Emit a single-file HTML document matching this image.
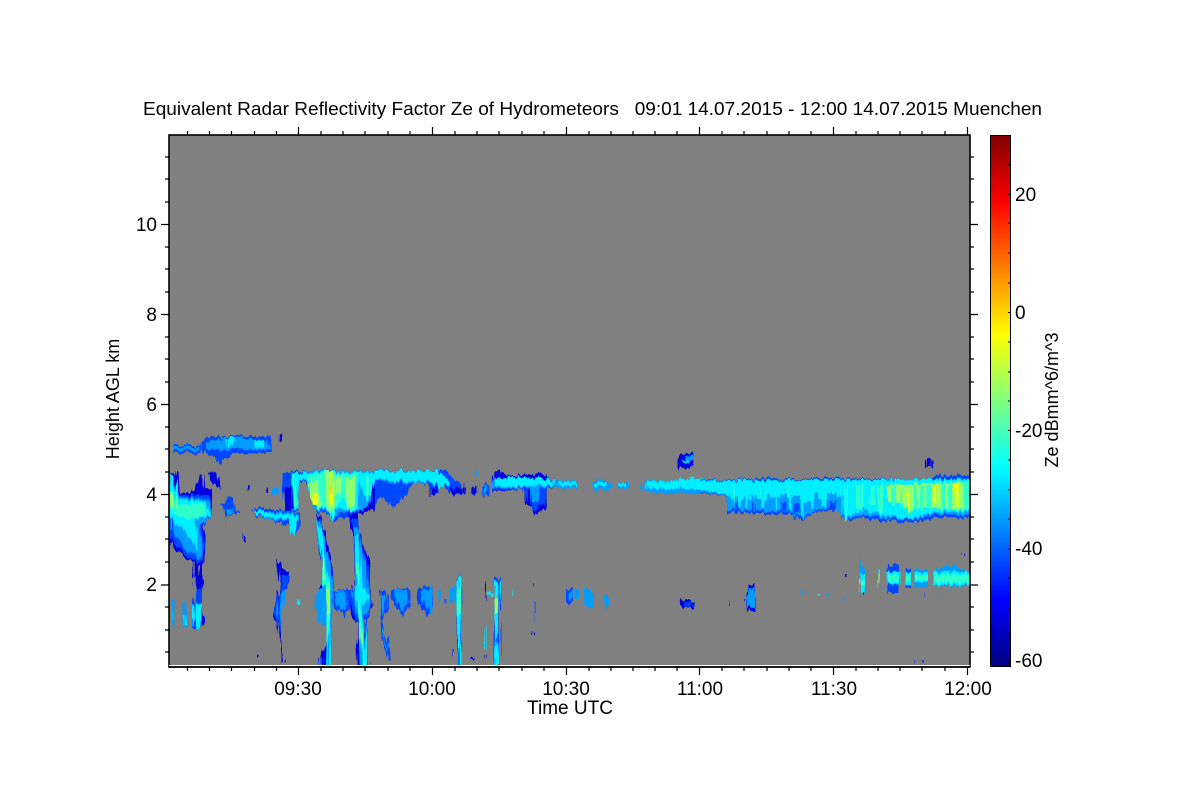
<!DOCTYPE html>
<html><head><meta charset="utf-8"><title>Radar Reflectivity</title>
<style>
html,body{margin:0;padding:0;background:#fff}
svg{display:block}
text{font-family:"Liberation Sans",Arial,sans-serif;fill:#000}
.a{fill:#0000e0}.b{fill:#0048ff}.c{fill:#009cff}.d{fill:#00eeff}.e{fill:#30ffcc}.f{fill:#90ff70}.g{fill:#f0ff10}.h{fill:#ffa000}
</style></head>
<body>
<svg width="1200" height="800" viewBox="0 0 1200 800" xmlns="http://www.w3.org/2000/svg">
<defs>
<linearGradient id="jet" x1="0" y1="1" x2="0" y2="0">
<stop offset="0" stop-color="#000080"/><stop offset=".125" stop-color="#0000ff"/><stop offset=".375" stop-color="#00ffff"/><stop offset=".5" stop-color="#80ff80"/><stop offset=".625" stop-color="#ffff00"/><stop offset=".875" stop-color="#ff0000"/><stop offset="1" stop-color="#800000"/>
</linearGradient>
<filter id="st" filterUnits="userSpaceOnUse" x="169" y="135" width="801" height="531" color-interpolation-filters="sRGB">
<feTurbulence type="fractalNoise" baseFrequency="0.34 0.012" numOctaves="2" seed="7"/>
<feDisplacementMap in="SourceGraphic" xChannelSelector="B" yChannelSelector="G" scale="9"/>
</filter>
<clipPath id="pc"><rect x="169" y="135" width="801" height="530"/></clipPath>
</defs>
<rect width="1200" height="800" fill="#fff"/>
<rect x="169" y="135" width="801" height="530" fill="#808080"/>
<g clip-path="url(#pc)"><g filter="url(#st)">
<g transform="translate(160 420) scale(.33333)">
<!-- top band left -->
<rect class="b" x="42" y="75" width="80" height="23"/>
<rect class="c" x="46" y="80" width="70" height="10"/>
<polygon class="b" points="125,70 140,52 205,48 330,48 338,97 275,99 220,105 190,118 180,135 165,110 125,95"/>
<polygon class="b" points="128,72 145,55 330,52 335,92 130,92"/>
<polygon class="c" points="140,68 205,50 320,60 330,88 140,88"/>
<polygon class="d" points="200,52 225,52 225,78 200,78"/><rect class="d" x="285" y="60" width="30" height="22"/>
<rect class="a" x="355" y="45" width="10" height="24"/>
<!-- left cloud -->
<polygon class="a" points="30,160 50,155 60,220 100,215 120,160 130,160 135,205 160,205 155,265 150,285 125,320 132,350 130,430 118,440 122,470 130,490 125,510 112,510 105,490 100,470 100,430 70,410 40,385 30,350"/>
<polygon class="a" points="145,155 170,155 182,210 165,190 148,175"/>
<polygon class="b" points="30,170 55,225 150,225 152,285 122,320 130,380 122,432 90,420 50,380 30,345"/>
<polygon class="c" points="30,190 60,230 150,240 150,285 118,320 125,425 105,410 80,395 60,370 35,325"/>
<polygon class="d" points="30,165 48,165 52,235 140,245 150,285 105,300 112,400 95,370 70,330 50,320 30,285"/>
<polygon class="e" points="30,215 45,215 50,255 130,250 138,282 95,300 60,295 35,275"/>
<polygon class="f" points="32,220 45,225 45,262 32,262"/>
<ellipse class="a" cx="117" cy="487" rx="15" ry="22"/>
<polygon class="b" points="108,505 124,505 125,622 100,622 100,560"/>
<polygon class="a" points="125,565 140,600 125,622"/>
<polygon class="d" points="103,550 124,550 126,590 118,622 108,622 102,590"/>
<rect class="c" x="36" y="540" width="7" height="82"/><rect class="d" x="38" y="560" width="3" height="40"/>
<polygon class="c" points="72,545 82,545 85,622 70,622"/><rect class="d" x="74" y="585" width="7" height="30"/>
<!-- small blobs -->
<polygon class="b" points="195,245 205,228 220,232 225,268 238,275 215,285 195,285 192,318 190,265 183,255"/>
<polygon class="c" points="198,262 222,270 212,283 198,283"/>
<rect class="a" x="245" y="345" width="14" height="18"/>
<rect class="c" x="338" y="205" width="18" height="18"/>
<rect class="a" x="266" y="198" width="3" height="14"/><rect class="a" x="321" y="205" width="3" height="14"/>
<!-- stripe -->
<polygon class="b" points="275,268 295,262 420,278 423,320 400,335 390,320 350,305 330,295 285,288"/>
<polygon class="c" points="278,270 410,280 415,300 350,300 300,288"/>
<polygon class="d" points="280,272 300,270 345,282 410,285 398,340 390,322 385,298 340,292 285,282"/>
<!-- main top band -->
<polygon class="b" points="370,155 840,150 840,215 820,228 800,190 760,185 730,235 700,260 660,230 640,270 590,280 580,290 520,300 510,280 470,275 440,185 415,185 412,270 380,275 368,205"/>
<polygon class="a" points="372,200 392,200 395,270 380,275"/><polygon class="a" points="590,190 640,190 640,270 600,280"/>
<polygon class="c" points="430,155 650,152 840,155 840,188 690,188 640,180 630,255 595,275 555,275 520,290 510,275 460,265 445,185 430,180"/>
<polygon class="d" points="392,160 840,150 840,183 720,183 640,178 625,250 610,225 600,180 590,275 560,270 530,265 518,305 508,265 470,265 450,225 445,180 415,178 412,265 403,265 392,190"/>
<polygon class="e" points="450,165 590,160 585,270 560,270 550,230 530,260 520,285 500,262 475,262 455,235"/>
<polygon class="f" points="450,190 475,185 482,255 462,255 450,235"/>
<polygon class="f" points="495,155 520,155 525,255 510,275 498,235"/>
<polygon class="f" points="555,175 578,170 585,255 565,265 558,230"/>
<polygon class="f" points="528,170 545,170 540,220 530,220"/>
<polygon class="g" points="458,220 472,225 475,255 462,255"/>
<polygon class="g" points="504,160 518,160 520,250 510,258 504,220"/>
<polygon class="f" points="560,185 575,185 572,230 562,225"/>
<rect class="h" x="507" y="165" width="6" height="60"/>
<polygon class="e" points="396,165 408,165 410,255 402,255"/>
<polygon class="e" points="615,170 628,170 630,240 620,230"/>
<!-- streak 1 -->
<polygon class="a" points="465,280 480,285 483,320 500,335 520,430 522,500 510,610 512,738 485,738 482,715 500,650 495,600 475,520 483,490 482,420 470,330"/>
<polygon class="c" points="465,285 480,300 482,325 495,345 515,435 520,500 510,610 512,738 498,738 500,640 490,570 482,490 483,420 470,330"/>
<polygon class="d" points="468,295 480,325 490,350 500,440 512,495 505,600 508,738 501,738 500,640 492,570 484,480 484,420"/>
<polygon class="e" points="484,400 494,400 498,470 512,500 505,600 503,680 500,680 492,570 486,480"/>
<polygon class="f" points="484,415 492,415 494,478 486,478"/><polygon class="f" points="500,505 510,510 503,585 498,585"/>
<!-- streak 2 -->
<polygon class="a" points="568,280 590,280 600,320 605,360 627,420 630,490 640,560 615,600 628,738 590,738 588,690 598,620 575,590 570,540 582,480 578,345"/>
<polygon class="b" points="575,295 595,300 603,365 622,420 625,495 640,550 615,600 626,738 600,738 598,620 580,585 572,530 584,490 580,345"/>
<polygon class="c" points="578,320 598,325 605,380 618,430 622,500 635,545 612,590 625,738 603,738 598,610 585,570 575,520 584,490 582,350"/>
<polygon class="d" points="582,345 594,345 604,440 610,500 625,525 608,570 620,738 607,738 598,600 592,570 582,515 592,490 588,370"/>
<polygon class="e" points="590,430 600,435 603,495 595,495"/>
<polygon class="e" points="594,535 600,545 615,738 610,738"/>
<polygon class="f" points="602,635 607,635 609,675 605,675"/>
<!-- left column streak -->
<polygon class="a" points="345,408 355,430 385,455 390,475 372,520 362,590 360,640 368,700 375,728 363,728 360,680 350,605 342,585 350,540 360,500 355,460"/>
<polygon class="b" points="362,465 385,462 388,478 370,520 368,600 358,640 350,600 345,570 352,535 365,500"/>
<polygon class="c" points="360,525 378,505 372,560 368,600 358,615 352,580"/>
<!-- low-level band -->
<polygon class="b" points="520,515 560,505 575,515 572,560 555,590 540,570 525,565"/>
<polygon class="c" points="528,515 560,510 565,555 545,570 530,550"/>
<polygon class="c" points="470,520 495,490 500,560 495,620 480,610 468,560"/>
<polygon class="b" points="655,515 680,510 685,570 668,600 690,695 692,728 685,728 680,695 665,640 660,590 658,550"/>
<polygon class="c" points="660,525 680,525 680,565 668,585"/>
<polygon class="c" points="670,620 680,670 690,695 683,690 668,640"/>
<polygon class="b" points="695,510 745,505 752,560 730,585 712,570 695,530"/>
<polygon class="c" points="705,510 740,510 745,550 725,570 708,540"/>
<polygon class="b" points="775,505 820,495 822,560 800,590 780,550 768,530"/>
<polygon class="c" points="785,510 815,510 815,550 800,570 788,540"/>
<rect class="c" x="835" y="515" width="5" height="40"/>
<rect class="d" x="412" y="540" width="10" height="14"/>
<rect class="a" x="290" y="705" width="4" height="8"/>
<rect class="b" x="482" y="715" width="6" height="22"/>
</g>
<g transform="translate(430 440) scale(.33333)">
<polygon class="b" points="0,90 50,90 75,125 100,130 102,162 60,162 30,125 20,165 0,165"/>
<polygon class="d" points="0,92 25,92 65,130 30,142 0,125"/>
<rect class="a" x="0" y="145" width="18" height="20"/><rect class="a" x="65" y="145" width="38" height="18"/>
<rect class="c" x="132" y="96" width="10" height="18"/>
<rect class="a" x="124" y="140" width="16" height="22"/>
<rect class="b" x="155" y="132" width="22" height="35"/><rect class="c" x="160" y="140" width="12" height="22"/>
<polygon class="a" points="190,105 210,92 228,105 250,105 350,105 352,145 350,200 315,225 305,200 285,190 280,145 190,155"/>
<polygon class="b" points="190,115 370,118 372,142 350,148 340,195 325,195 320,215 305,205 302,145 290,145 290,190 280,145 190,152"/>
<polygon class="c" points="188,122 372,122 372,140 325,145 325,185 305,185 305,142 188,145"/>
<polygon class="d" points="196,120 240,108 300,115 372,122 370,138 196,140"/>
<polygon class="c" points="375,122 445,122 445,144 405,144 405,160 398,144 375,144"/>
<rect class="d" x="385" y="125" width="55" height="12"/>
<polygon class="c" points="485,130 495,120 530,120 548,140 540,152 500,145 498,160 490,145"/>
<rect class="d" x="495" y="128" width="40" height="10"/>
<rect class="c" x="560" y="128" width="40" height="17"/><rect class="d" x="568" y="130" width="24" height="9"/>
<rect class="c" x="628" y="130" width="10" height="20"/>
<polygon class="c" points="645,122 840,118 840,160 680,160 645,152"/>
<polygon class="d" points="648,125 760,120 790,112 840,122 840,148 648,145"/>
<polygon class="a" points="745,56 768,40 792,40 792,80 752,88 744,78"/>
<rect class="c" x="768" y="48" width="24" height="16"/><rect class="d" x="760" y="62" width="14" height="6"/>
<!-- low -->
<polygon class="c" points="0,436 10,436 10,520 0,510"/>
<rect class="c" x="25" y="450" width="10" height="30"/>
<polygon class="c" points="60,450 80,435 85,495 65,490"/>
<rect class="b" x="44" y="478" width="4" height="14"/>
<polygon class="b" points="83,410 95,410 97,678 83,678"/>
<polygon class="d" points="84,412 95,412 94,540 88,600 95,640 95,678 85,678 86,530"/>
<polygon class="e" points="85,450 93,450 95,525 88,525"/>
<polygon class="b" points="195,410 210,420 210,678 193,678"/>
<polygon class="d" points="195,420 208,430 207,540 200,600 208,660 208,678 196,678 198,590 192,520"/>
<polygon class="f" points="192,480 205,480 205,520 194,525"/>
<rect class="a" x="165" y="425" width="3" height="65"/><rect class="d" x="165" y="565" width="3" height="65"/><rect class="a" x="165" y="645" width="3" height="10"/>
<rect class="d" x="172" y="458" width="16" height="9"/>
<rect class="d" x="248" y="450" width="3" height="18"/>
<rect class="a" x="308" y="435" width="3" height="9"/><rect class="b" x="308" y="485" width="4" height="65"/><rect class="a" x="308" y="578" width="4" height="10"/>
<rect class="c" x="353" y="435" width="4" height="9"/>
<polygon class="b" points="405,450 425,445 427,492 405,490"/><rect class="c" x="413" y="455" width="12" height="25"/>
<rect class="c" x="435" y="450" width="12" height="28"/>
<polygon class="c" points="465,445 478,445 490,460 490,500 466,500"/>
<polygon class="c" points="522,460 537,482 537,500 522,505"/>
<polygon class="a" points="753,480 778,480 790,490 785,505 755,500"/><rect class="b" x="765" y="488" width="18" height="12"/>
<rect class="a" x="65" y="630" width="4" height="22"/><rect class="a" x="125" y="654" width="4" height="6"/>
</g>
<g transform="translate(700 440) scale(.33333)">
<polygon class="b" points="0,120 90,120 150,118 190,114 300,118 380,114 690,118 700,105 810,105 810,234 770,234 720,234 680,240 620,248 560,243 530,243 490,232 440,240 410,210 340,218 300,242 270,222 190,222 155,218 100,218 85,218 78,165 0,160"/>
<polygon class="c" points="0,122 810,116 810,226 700,224 640,238 560,236 500,226 440,232 400,205 350,210 300,232 260,212 200,215 160,210 100,210 85,210 78,162 0,158"/>
<polygon class="d" points="0,124 810,116 810,215 700,218 625,238 540,224 490,205 435,232 420,170 385,180 350,175 305,190 285,175 230,170 195,180 170,175 150,180 125,175 100,190 85,165 0,150"/>
<!-- blue hanging stripes -->
<path class="c" d="M105 165h12v45h-12zM150 165h18v45h-18zM200 165h10v45h-10zM240 160h20v50h-20zM275 165h25v60h-25zM345 160h12v50h-12zM385 160h25v45h-25zM420 170h10v40h-10z"/>
<path class="b" d="M108 185h6v25h-6zM155 185h10v30h-10zM245 185h12v25h-12zM280 190h18v30h-18zM390 185h18v22h-18z"/>
<path class="d" d="M115 150h8v55h-8zM135 150h10v55h-10zM185 150h8v60h-8zM225 150h10v55h-10zM265 150h8v60h-8zM302 150h8v85h-8zM330 150h10v55h-10zM365 150h15v50h-15zM435 150h5v90h-5zM470 150h15v70h-15zM505 150h15v70h-15z"/>
<path class="e" d="M98 140h6v50h-6zM178 140h5v40h-5zM265 140h5v40h-5zM436 140h3v95h-3zM470 135h18v70h-18zM510 135h16v60h-16zM535 135h14v80h-14z"/>
<polygon class="f" points="555,135 810,125 810,200 770,210 700,205 640,200 625,225 610,190 565,185"/>
<path class="e" d="M575 140h8v60h-8zM600 150h6v50h-6zM640 140h12v70h-12zM660 135h10v75h-10zM680 135h12v70h-12zM725 130h10v80h-10zM745 130h8v80h-8zM790 125h20v85h-20z"/>
<polygon class="g" points="764,130 780,130 776,200 768,195"/>
<polygon class="g" points="698,135 712,135 708,195 700,188"/>
<polygon class="g" points="619,155 630,158 627,205 622,205"/>
<!-- lower -->
<polygon class="a" points="148,435 158,435 166,485 162,515 144,515 132,485"/>
<polygon class="c" points="148,445 158,445 163,485 158,505 146,505 136,480"/>
<rect class="b" x="87" y="478" width="3" height="14"/><rect class="a" x="84" y="492" width="3" height="8"/>
<rect class="c" x="306" y="450" width="3" height="17"/><rect class="d" x="353" y="460" width="3" height="7"/><rect class="c" x="383" y="460" width="3" height="7"/>
<rect class="a" x="435" y="402" width="3" height="9"/><rect class="c" x="435" y="468" width="3" height="9"/>
<polygon class="c" points="480,355 484,355 484,372 500,390 498,460 480,458"/>
<rect class="d" x="481" y="400" width="16" height="58"/><rect class="e" x="480" y="420" width="16" height="14"/>
<rect class="b" x="485" y="458" width="8" height="10"/>
<rect class="d" x="534" y="388" width="3" height="62"/><rect class="f" x="534" y="402" width="3" height="30"/>
<rect class="c" x="548" y="444" width="3" height="14"/>
<polygon class="b" points="570,378 595,374 597,458 563,458 563,395"/>
<rect class="d" x="563" y="396" width="34" height="36"/><rect class="e" x="566" y="405" width="30" height="20"/>
<rect class="b" x="617" y="388" width="16" height="56"/><rect class="d" x="617" y="398" width="16" height="38"/><rect class="e" x="620" y="405" width="10" height="20"/>
<rect class="c" x="645" y="388" width="38" height="54"/><rect class="d" x="645" y="396" width="38" height="30"/><rect class="e" x="648" y="405" width="34" height="15"/>
<polygon class="c" points="696,396 715,385 760,378 790,390 790,396 810,402 810,435 765,440 700,435"/>
<rect class="d" x="696" y="396" width="114" height="39"/><rect class="e" x="700" y="405" width="110" height="22"/>
<rect class="a" x="785" y="340" width="4" height="8"/><rect class="a" x="642" y="660" width="3" height="8"/><rect class="a" x="666" y="660" width="3" height="8"/>
<rect class="c" x="716" y="458" width="6" height="9"/><rect class="b" x="672" y="462" width="3" height="14"/>
<rect class="a" x="672" y="57" width="6" height="24"/><rect class="a" x="688" y="57" width="8" height="24"/>
</g>
</g></g>
<!-- frame -->
<rect x="169" y="135" width="801" height="532" fill="none" stroke="#000" stroke-width="1.6"/>
<path d="M169 665.500H970" stroke="#fff" stroke-width="1"/>
<path d="M169 667H970" stroke="#000" stroke-width="1.6"/>
<!-- ticks -->
<path stroke="#000" stroke-width="1.2" fill="none" d="M161 224.500h8M161 314.500h8M161 404.500h8M161 494.500h8M161 585h8
M165 157h4M165 179h4M165 202h4M165 247h4M165 269h4M165 292h4M165 337h4M165 359h4M165 382h4M165 427h4M165 449h4M165 472h4M165 517h4M165 539h4M165 562h4M165 607h4M165 630h4M165 652h4
M970 224.500h8M970 314.500h8M970 404.500h8M970 494.500h8M970 585h8
M970 157h4M970 179h4M970 202h4M970 247h4M970 269h4M970 292h4M970 337h4M970 359h4M970 382h4M970 427h4M970 449h4M970 472h4M970 517h4M970 539h4M970 562h4M970 607h4M970 630h4M970 652h4
M298.500 667v8M432.500 667v8M566.500 667v8M699.500 667v8M833.500 667v8M967.500 667v8
M187.500 667v4M209.500 667v4M231.500 667v4M254.500 667v4M276.500 667v4M321 667v4M343 667v4M365 667v4M388 667v4M410 667v4M455 667v4M477 667v4M499 667v4M522 667v4M544 667v4M589 667v4M611 667v4M633 667v4M655 667v4M677 667v4M722 667v4M744 667v4M767 667v4M789 667v4M811 667v4M856 667v4M878 667v4M900 667v4M922 667v4M945 667v4
M298.500 135v-8M432.500 135v-8M566.500 135v-8M699.500 135v-8M833.500 135v-8M967.500 135v-8
M187.500 135v-4M209.500 135v-4M231.500 135v-4M254.500 135v-4M276.500 135v-4M321 135v-4M343 135v-4M365 135v-4M388 135v-4M410 135v-4M455 135v-4M477 135v-4M499 135v-4M522 135v-4M544 135v-4M589 135v-4M611 135v-4M633 135v-4M655 135v-4M677 135v-4M722 135v-4M744 135v-4M767 135v-4M789 135v-4M811 135v-4M856 135v-4M878 135v-4M900 135v-4M922 135v-4M945 135v-4"/>
<!-- colorbar -->
<rect x="990.500" y="135.500" width="20" height="531" fill="url(#jet)" stroke="#000" stroke-width="1"/>
<path stroke="#000" stroke-width="1" d="M1008 194.500h2M1008 312.500h2M1008 430.500h2M1008 549h2M1008 661h2M1008 164.500h2M1008 223h2M1008 253h2M1008 283h2M1008 342h2M1008 372h2M1008 401h2M1008 460h2M1008 490h2M1008 519h2M1008 578h2M1008 608h2M1008 637h2"/>
<!-- text -->
<text x="143" y="115" font-size="18" textLength="899" lengthAdjust="spacingAndGlyphs" xml:space="preserve">Equivalent Radar Reflectivity Factor Ze of Hydrometeors   09:01 14.07.2015 - 12:00 14.07.2015 Muenchen</text>
<g font-size="19" text-anchor="end">
<text x="157" y="231">10</text><text x="157" y="321">8</text><text x="157" y="411">6</text><text x="157" y="501">4</text><text x="157" y="591">2</text>
</g>
<g font-size="19" text-anchor="middle">
<text x="298" y="695">09:30</text><text x="432" y="695">10:00</text><text x="566" y="695">10:30</text><text x="700" y="695">11:00</text><text x="834" y="695">11:30</text><text x="968" y="695">12:00</text>
<text x="570" y="714">Time UTC</text>
</g>
<g font-size="18" text-anchor="middle">
<text transform="translate(119 399) rotate(-90)">Height AGL km</text>
<text transform="translate(1058 400) rotate(-90)">Ze dBmm^6/m^3</text>
</g>
<g font-size="19">
<text x="1015" y="201">20</text><text x="1015" y="319">0</text><text x="1015" y="437">-20</text><text x="1015" y="555">-40</text><text x="1015" y="667">-60</text>
</g>
</svg>
</body></html>
